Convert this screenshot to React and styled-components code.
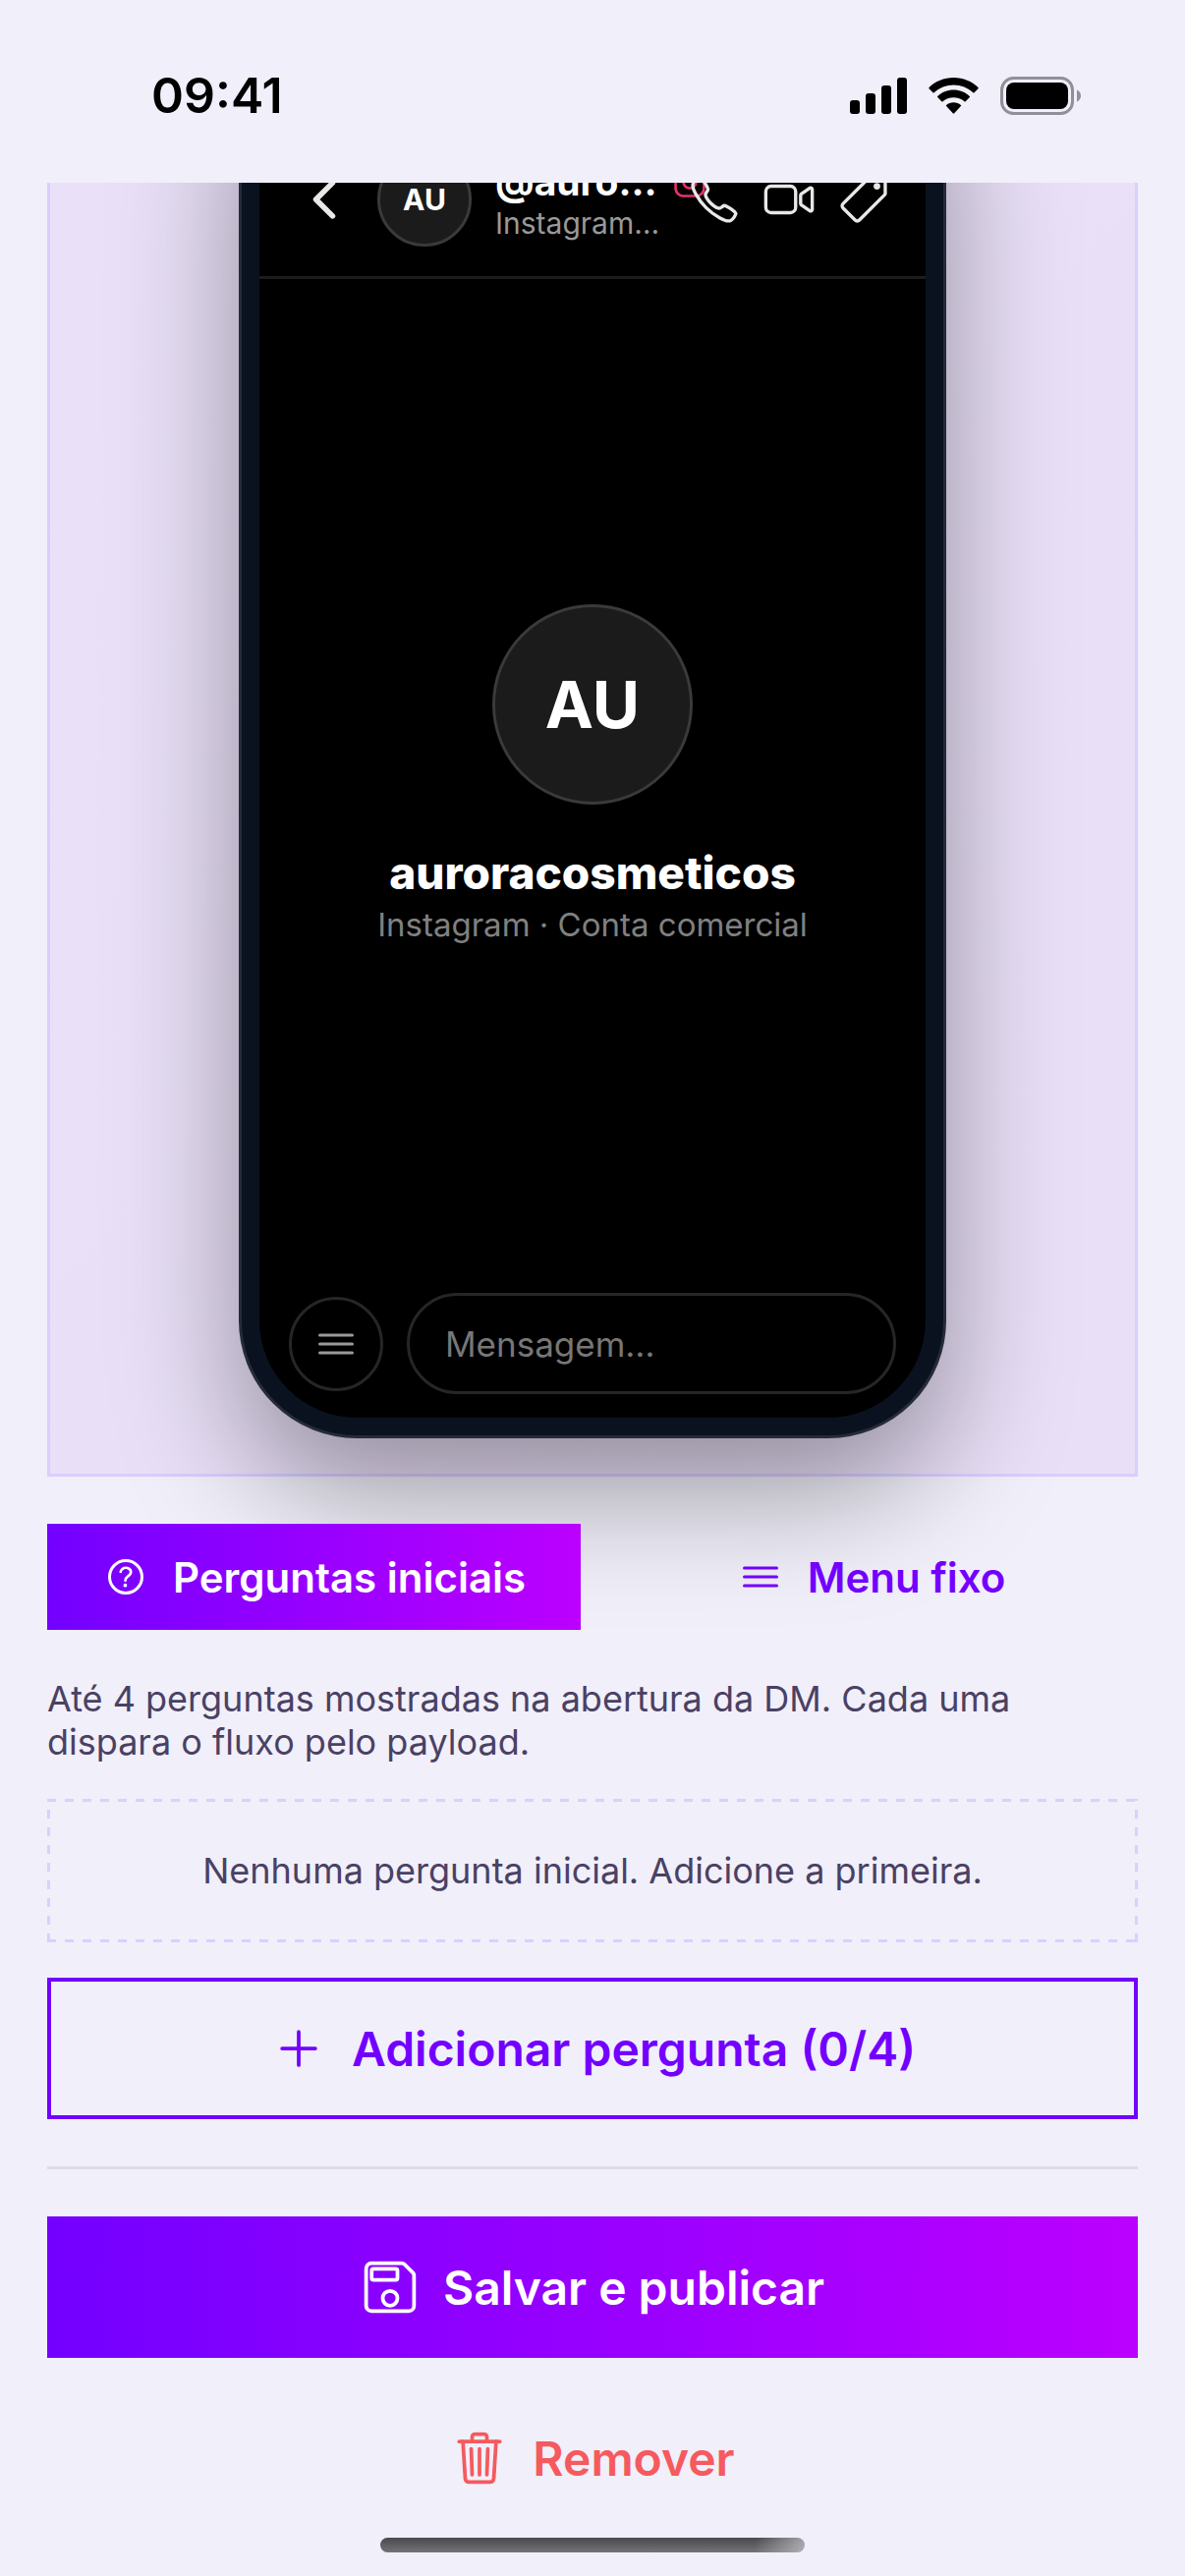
import React, { useState } from 'react';
import styled, { createGlobalStyle } from 'styled-components';
import {
  IoAddOutline,
  IoCallOutline,
  IoChevronBack,
  IoHelpCircleOutline,
  IoLogoInstagram,
  IoMenuOutline,
  IoPricetagOutline,
  IoSaveOutline,
  IoTrashOutline,
  IoVideocamOutline,
} from 'react-icons/io5';

const GlobalStyle = createGlobalStyle`
  * {
    box-sizing: border-box;
  }

  body {
    margin: 0;
    background: #f1effa;
    font-family: Inter, 'Liberation Sans', sans-serif;
    overflow-x: hidden;
  }

  button,
  input {
    font-family: inherit;
  }

  p {
    margin: 0;
  }
`;

const Page = styled.div`
  display: flex;
  flex-direction: column;
  min-height: 100vh;
  background: #f1effa;
`;

const StatusBar = styled.header`
  position: sticky;
  top: 0;
  z-index: 2;
  display: flex;
  align-items: center;
  justify-content: space-between;
  height: 186px;
  padding: 8px 106px 0 154px;
  background: #f1effa;
`;

const Clock = styled.span`
  color: #000;
  font-size: 50px;
  font-weight: 600;
  line-height: 62px;
`;

const StatusIcons = styled.div`
  display: flex;
  align-items: center;
  gap: 22px;
`;

/* Scrolled up, so the top of the preview sits under the status bar. */
const Content = styled.main`
  display: flex;
  flex-direction: column;
  margin-top: -211px;
  padding: 0 48px;
`;

const Stage = styled.section`
  display: flex;
  justify-content: center;
  padding: 36px;
  border: 3px solid #d8ceff;
  background: linear-gradient(135deg, #eae1f8, #e9dff7);
`;

const Phone = styled.div`
  width: 720px;
  max-width: 100%;
  padding: 18px;
  border: 3px solid #252b38;
  border-radius: 120px;
  background: #0b121f;
  box-shadow: 0 54px 126px rgba(0, 0, 0, 0.37);
`;

const Screen = styled.div`
  display: flex;
  flex-direction: column;
  height: 1408px;
  padding-top: 90px;
  border-radius: 99px;
  background: #000;
  overflow: hidden;
`;

const ChatHeader = styled.div`
  display: flex;
  align-items: center;
  gap: 24px;
  padding: 30px 36px;
  border-bottom: 3px solid #1c1c1c;
  color: #e8e8e8;

  > svg {
    flex: none;
  }
`;

const Avatar = styled.div`
  display: flex;
  flex: none;
  align-items: center;
  justify-content: center;
  width: ${(props) => (props.$large ? 204 : 96)}px;
  height: ${(props) => (props.$large ? 204 : 96)}px;
  border: 3px solid #3a3a3a;
  border-radius: 50%;
  background: #1b1b1b;
  color: #fff;
  font-size: ${(props) => (props.$large ? 66 : 30)}px;
  font-weight: 700;
`;

const Contact = styled.div`
  flex: 1;
  min-width: 0;
`;

const HandleRow = styled.div`
  display: flex;
  align-items: center;
  gap: 12px;
  color: #e8316e;

  svg {
    flex: none;
  }
`;

const Handle = styled.span`
  flex: 0 0 100%;
  overflow: hidden;
  color: #fff;
  font-size: 39px;
  font-weight: 700;
  line-height: 48px;
  text-overflow: ellipsis;
  white-space: nowrap;
`;

const HandleNote = styled.p`
  overflow: hidden;
  color: #999;
  font-size: 30px;
  line-height: 36px;
  text-overflow: ellipsis;
  white-space: nowrap;
`;

const ChatActions = styled.div`
  display: flex;
  flex: none;
  gap: 22px;
  margin-left: 4px;
`;

const Profile = styled.div`
  display: flex;
  flex: 1;
  flex-direction: column;
  align-items: center;
  justify-content: center;
`;

const ProfileName = styled.h2`
  margin: 42px 0 6px;
  color: #fff;
  font-size: 46px;
  font-weight: 800;
  line-height: 54px;
`;

const ProfileNote = styled.p`
  color: #808080;
  font-size: 33px;
  line-height: 40px;
`;

const Composer = styled.div`
  display: flex;
  align-items: center;
  gap: 24px;
  padding: 24px 30px;
`;

const RoundButton = styled.button`
  display: flex;
  flex: none;
  align-items: center;
  justify-content: center;
  width: 96px;
  height: 96px;
  padding: 0;
  border: 3px solid #262626;
  border-radius: 50%;
  background: transparent;
  color: #999;
`;

const MessageInput = styled.input`
  flex: 1;
  min-width: 0;
  height: 103px;
  padding: 0 36px;
  border: 3px solid #262626;
  border-radius: 52px;
  background: transparent;
  color: #fff;
  font-size: 35px;

  &::placeholder {
    color: #777;
    opacity: 1;
  }
`;

const Tabs = styled.div`
  display: grid;
  grid-template-columns: 1fr 1fr;
  gap: 24px;
  margin: 48px 0;
`;

const Tab = styled.button`
  display: flex;
  align-items: center;
  justify-content: center;
  gap: 24px;
  height: 108px;
  border: 0;
  background: ${(props) =>
    props.$active ? 'linear-gradient(90deg, #7300ff, #bb00ff)' : 'transparent'};
  color: ${(props) => (props.$active ? '#fff' : '#7300ff')};
  font-size: 42px;
  font-weight: 600;
`;

const Hint = styled.p`
  color: #4a4163;
  font-size: 36px;
  line-height: 44px;
`;

/* Long dashes on every side, wider apart than a dashed border gives. */
const EmptyState = styled.div`
  --dash: #d8d0ff 0 9px, transparent 9px 18px;
  margin: 36px 0;
  padding: 51px;
  background:
    repeating-linear-gradient(90deg, var(--dash)) top / 100% 3px no-repeat,
    repeating-linear-gradient(90deg, var(--dash)) bottom / 100% 3px no-repeat,
    repeating-linear-gradient(0deg, var(--dash)) left / 3px 100% no-repeat,
    repeating-linear-gradient(0deg, var(--dash)) right / 3px 100% no-repeat;
  text-align: center;
`;

const ActionButton = styled.button`
  display: flex;
  align-items: center;
  justify-content: center;
  gap: 24px;
  height: 144px;
  border: ${(props) => (props.$kind === 'outline' ? '4px solid #7300ff' : '0')};
  background: ${(props) =>
    props.$kind === 'primary' ? 'linear-gradient(90deg, #7300ff, #bb00ff)' : 'transparent'};
  color: ${(props) =>
    ({ outline: '#7300ff', primary: '#fff', danger: '#f55a5f' })[props.$kind]};
  font-size: 48px;
  font-weight: 600;
`;

const Divider = styled.hr`
  width: 100%;
  height: 3px;
  margin: 48px 0;
  border: 0;
  background: #dedbe8;
`;

const Footer = styled.div`
  display: flex;
  flex-direction: column;
  gap: 30px;
`;

const HomeIndicator = styled.div`
  align-self: center;
  width: 432px;
  height: 15px;
  margin: 9px 0 24px;
  border-radius: 8px;
  background:
    linear-gradient(100deg, transparent 88%, rgba(190, 190, 195, 0.8)),
    linear-gradient(#4a4a4d, #737377);
`;

function Signal() {
  return (
    <svg width="58" height="39" viewBox="0 0 58 39" aria-hidden="true">
      <rect x="0" y="24" width="10" height="14" rx="3" />
      <rect x="16" y="17" width="10" height="21" rx="3" />
      <rect x="32" y="9" width="10" height="29" rx="3" />
      <rect x="48" y="1" width="10" height="37" rx="3" />
    </svg>
  );
}

function Wifi() {
  return (
    <svg width="51" height="39" viewBox="0 0 51 39" aria-hidden="true">
      <path d="M25.5 1C35.300 1 44 4.800 50.500 11Q51 11.600 50.500 12.200L46.500 16.300Q45.900 16.800 45.300 16.300C40 11.400 33.100 8.500 25.500 8.500S11 11.400 5.700 16.300Q5.100 16.800 4.500 16.300L.5 12.200Q0 11.600.5 11C7 4.800 15.700 1 25.500 1Z" />
      <path d="M25.500 13.600C31.900 13.600 37.500 16 41.800 19.900Q42.400 20.500 41.800 21.100L37.700 25.200Q37.100 25.700 36.500 25.200C33.500 22.700 29.700 21.200 25.500 21.200S17.500 22.700 14.500 25.200Q13.900 25.700 13.300 25.200L9.200 21.100Q8.600 20.500 9.200 19.900C13.500 16 19.100 13.600 25.500 13.600Z" />
      <path d="M25.500 26.200C28.400 26.200 30.900 27.200 32.900 28.900Q33.500 29.500 32.900 30.100L26.200 37.300Q25.500 38 24.800 37.300L18.100 30.100Q17.500 29.500 18.100 28.900C20.100 27.200 22.600 26.200 25.500 26.200Z" />
    </svg>
  );
}

function Battery() {
  return (
    <svg width="82" height="39" viewBox="0 0 82 39" aria-hidden="true">
      <rect x="1.500" y="1.500" width="72" height="36" rx="12" fill="none" stroke="#928f98" strokeWidth="3" />
      <rect x="6" y="6" width="63" height="27" rx="8" />
      <path d="M78 13.500C80.500 14.600 82 16.900 82 19.500S80.500 24.400 78 25.500Z" fill="#928f98" />
    </svg>
  );
}

export default function App() {
  const [tab, setTab] = useState('perguntas');

  return (
    <>
      <GlobalStyle />
      <Page>
        <StatusBar>
          <Clock>09:41</Clock>
          <StatusIcons>
            <Signal />
            <Wifi />
            <Battery />
          </StatusIcons>
        </StatusBar>

        <Content>
          <Stage>
            <Phone>
              <Screen>
                <ChatHeader>
                  <IoChevronBack size={60} />
                  <Avatar>AU</Avatar>
                  <Contact>
                    <HandleRow>
                      <Handle>@auroracosmeticos</Handle>
                      <IoLogoInstagram size={36} />
                    </HandleRow>
                    <HandleNote>Instagram · Conta comercial</HandleNote>
                  </Contact>
                  <ChatActions>
                    <IoCallOutline size={54} />
                    <IoVideocamOutline size={54} />
                    <IoPricetagOutline size={54} />
                  </ChatActions>
                </ChatHeader>
                <Profile>
                  <Avatar $large>AU</Avatar>
                  <ProfileName>auroracosmeticos</ProfileName>
                  <ProfileNote>Instagram · Conta comercial</ProfileNote>
                </Profile>
                <Composer>
                  <RoundButton type="button" aria-label="Menu">
                    <IoMenuOutline size={48} />
                  </RoundButton>
                  <MessageInput type="text" placeholder="Mensagem…" aria-label="Mensagem" />
                </Composer>
              </Screen>
            </Phone>
          </Stage>

          <Tabs role="tablist">
            <Tab
              type="button"
              role="tab"
              aria-selected={tab === 'perguntas'}
              $active={tab === 'perguntas'}
              onClick={() => setTab('perguntas')}
            >
              <IoHelpCircleOutline size={48} />
              Perguntas iniciais
            </Tab>
            <Tab
              type="button"
              role="tab"
              aria-selected={tab === 'menu'}
              $active={tab === 'menu'}
              onClick={() => setTab('menu')}
            >
              <IoMenuOutline size={48} />
              Menu fixo
            </Tab>
          </Tabs>

          <Hint>
            Até 4 perguntas mostradas na abertura da DM. Cada uma dispara o fluxo pelo payload.
          </Hint>
          <EmptyState>
            <Hint>Nenhuma pergunta inicial. Adicione a primeira.</Hint>
          </EmptyState>
          <ActionButton type="button" $kind="outline">
            <IoAddOutline size={60} />
            Adicionar pergunta (0/4)
          </ActionButton>
          <Divider />
          <Footer>
            <ActionButton type="button" $kind="primary">
              <IoSaveOutline size={60} />
              Salvar e publicar
            </ActionButton>
            <ActionButton type="button" $kind="danger">
              <IoTrashOutline size={60} />
              Remover
            </ActionButton>
          </Footer>
          <HomeIndicator />
        </Content>
      </Page>
    </>
  );
}
